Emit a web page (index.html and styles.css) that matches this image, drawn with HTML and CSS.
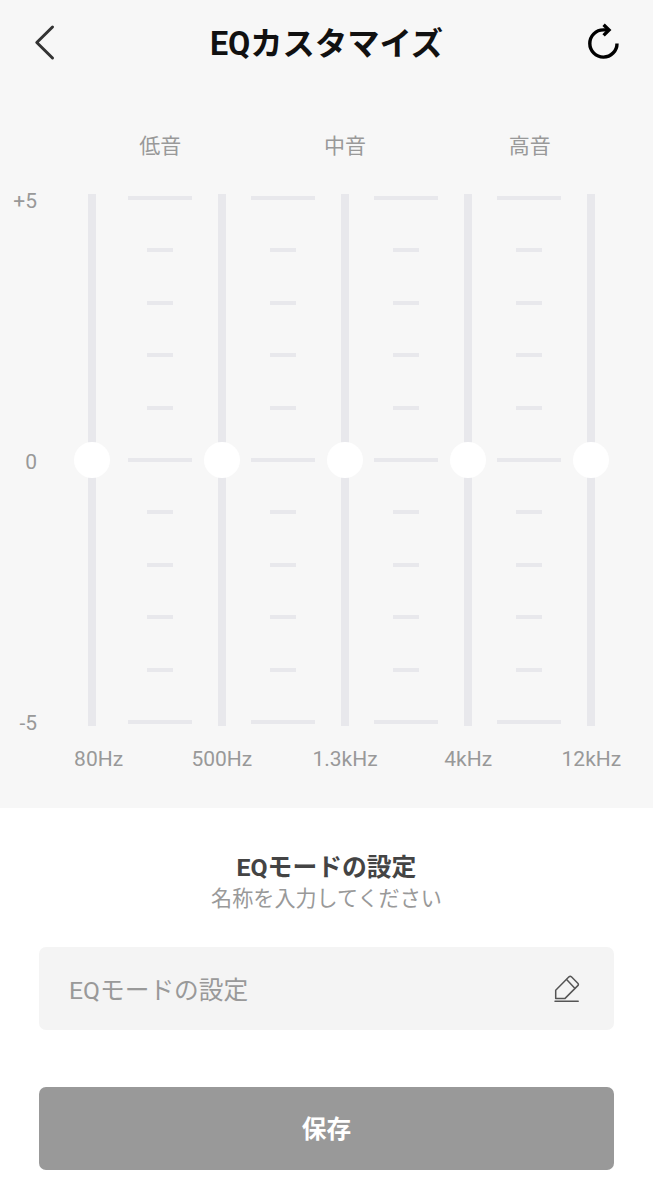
FILE: index.html
```
<!DOCTYPE html>
<html lang="ja">
<head>
    <meta charset="UTF-8">
    <meta name="viewport" content="width=device-width, initial-scale=1.0">
    <title>EQカスタマイズ</title>
    <link rel="stylesheet" href="styles.css">
</head>
<body>
    <section class="equalizer">
        <header class="topbar">
            <svg class="back" viewBox="0 0 24 38"><path d="M20.5 4 L4.8 19.5 L20.5 35"/></svg>
            <h1>EQカスタマイズ</h1>
            <svg class="reset" viewBox="0 0 36 38">
                <path d="M32 20.4 A13.6 13.6 0 1 1 18.4 6.9 H24"/>
                <path d="M18.6 1.8 L24 7 L18.6 12.4"/>
            </svg>
        </header>

        <div class="bands">
            <span>低音</span>
            <span>中音</span>
            <span>高音</span>
        </div>

        <div class="chart">
            <div class="scale">
                <span>+5</span>
                <span>0</span>
                <span>-5</span>
            </div>
            <div class="track"><div class="thumb"></div></div>
            <div class="ticks first"></div>
            <div class="track"><div class="thumb"></div></div>
            <div class="ticks"></div>
            <div class="track"><div class="thumb"></div></div>
            <div class="ticks"></div>
            <div class="track"><div class="thumb"></div></div>
            <div class="ticks"></div>
            <div class="track"><div class="thumb"></div></div>
        </div>

        <div class="freqs">
            <span>80Hz</span>
            <span>500Hz</span>
            <span>1.3kHz</span>
            <span>4kHz</span>
            <span>12kHz</span>
        </div>
    </section>

    <section class="mode">
        <h2>EQモードの設定</h2>
        <p>名称を入力してください</p>
        <div class="field">
            <input type="text" placeholder="EQモードの設定">
            <svg class="edit" viewBox="0 0 26 28">
                <path d="M1.7 23.6 V15.2 L15 1.8 Q16.2 0.8 17.4 1.8 L23.8 8.2 Q25 9.4 23.8 10.6 L10.8 23.6 Z"/>
                <path d="M12.6 4.6 L20.8 13.2"/>
                <path d="M1 26.2 H24.2"/>
            </svg>
        </div>
        <button>保存</button>
    </section>

    <script>
        // 11 marks from +5 to -5, long ones at +5, 0 and -5
        document.querySelectorAll('.ticks').forEach(function (ticks) {
            for (let i = 5; i >= -5; i--) {
                const mark = document.createElement('i');
                if (i % 5 === 0) {
                    mark.className = 'long';
                }
                ticks.appendChild(mark);
            }
        });
    </script>
</body>
</html>
```
FILE: styles.css
```
*{
    margin: 0;
    padding: 0;
    box-sizing: border-box;
}
body {
    font-family: Roboto, "Noto Sans CJK JP", sans-serif;
    background-color: #fff;
    color: #999;
}
svg{
    fill: none;
    stroke-linecap: round;
    stroke-linejoin: round;
}
.equalizer{
    height: 808px;
    background-color: #f7f7f7;
    font-size: 21px;
}
.topbar{
    display: grid;
    grid-template-columns: 36px 1fr 36px;
    align-items: center;
    height: 84px;
    padding: 0 32px;
}
.topbar h1{
    padding-top: 3px;
    font-size: 32.3px;
    line-height: 48px;
    font-weight: 700;
    text-align: center;
    color: #111;
}
.back{
    width: 24px;
    height: 38px;
    stroke: #333;
    stroke-width: 3;
}
.reset{
    width: 36px;
    height: 38px;
    stroke: #000;
    stroke-width: 3.4;
    stroke-linecap: butt;
    stroke-linejoin: miter;
}
.bands{
    display: grid;
    grid-template-columns: repeat(3, 1fr);
    height: 110px;
    padding: 47px 31px 0 68px;
    line-height: 30px;
    text-align: center;
}
.chart{
    display: grid;
    grid-template-columns: 88px 7.5px 122.5px 7.5px 115.5px 7.5px 115.5px 7.5px 115.8px 7.5px;
    height: 532px;
}
.scale{
    display: flex;
    flex-direction: column;
    justify-content: space-between;
    padding: 0 51px 0 0;
    margin: -8px 0 -12px;
    line-height: 30px;
    text-align: right;
}
.track{
    display: flex;
    justify-content: center;
    align-items: center;
    background-color: #e8e8ec;
}
.thumb{
    flex: none;
    width: 36px;
    height: 36px;
    border-radius: 50%;
    background-color: #fff;
}
.ticks{
    display: flex;
    flex-direction: column;
    justify-content: space-between;
    align-items: center;
    padding: 2px 0;
}
.first{
    padding-left: 6px;
}
.ticks i{
    width: 26px;
    height: 4px;
    background-color: #e8e8ec;
}
.ticks .long{
    width: 64px;
}
.freqs{
    display: grid;
    grid-template-columns: repeat(5, 1fr);
    padding: 18px 0 0 37px;
    line-height: 30px;
    text-align: center;
}
.mode{
    padding: 42px 39px 0;
    text-align: center;
}
.mode h2{
    font-size: 24.8px;
    line-height: 36px;
    color: #444;
}
.mode p{
    font-size: 21.1px;
    line-height: 26px;
}
.field{
    display: flex;
    align-items: center;
    height: 83px;
    margin-top: 35px;
    padding: 0 34px 0 30px;
    border-radius: 7px;
    background-color: #f4f4f4;
}
.field input{
    flex: 1;
    padding-top: 3px;
    border: none;
    outline: none;
    background: none;
    font-family: inherit;
    font-size: 24.7px;
}
.field input::placeholder{
    color: #999;
}
.edit{
    width: 26px;
    height: 28px;
    stroke: #555;
    stroke-width: 1.5;
}
.mode button{
    display: block;
    width: 100%;
    height: 83px;
    margin-top: 57px;
    padding-bottom: 3px;
    border: none;
    border-radius: 7px;
    background-color: #999;
    color: #fff;
    font-family: inherit;
    font-size: 24.7px;
    font-weight: 700;
}
```
